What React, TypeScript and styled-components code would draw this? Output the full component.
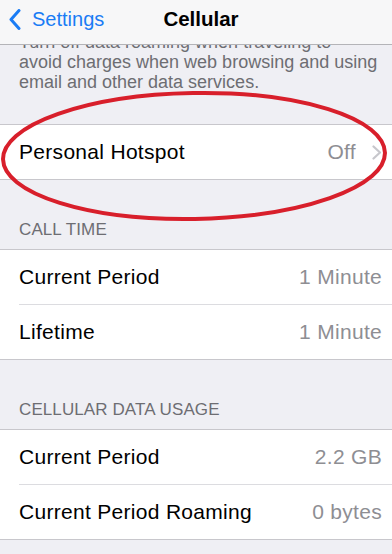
import React from "react";
import styled, { createGlobalStyle } from "styled-components";

const Global = createGlobalStyle`
  html, body { margin: 0; padding: 0; background: #efeff4; }
  body { font-family: "Liberation Sans", Arial, sans-serif; -webkit-font-smoothing: antialiased; }
`;

const Page = styled.div`
  position: relative;
  width: 392px;
  height: 554px;
  overflow: hidden;
  background: #efeff4;
  display: flex;
  flex-direction: column;
`;

const NavBar = styled.div`
  flex: 0 0 auto;
  height: 44px;
  border-bottom: 1px solid #b4b4b8;
  background: #f7f7f8;
  position: relative;
  z-index: 2;
  display: flex;
  align-items: center;
  justify-content: center;
`;

const BackButton = styled.div`
  position: absolute;
  left: 9px;
  top: 0;
  height: 38px;
  display: flex;
  align-items: center;
  gap: 11px;
  color: #1a7cf5;
  font-size: 20px;
`;

const Title = styled.div`
  font-size: 20.5px;
  font-weight: 700;
  color: #000;
  margin-top: -6px;
  margin-left: 10px;
`;

const Content = styled.div`
  flex: 1 1 auto;
  overflow: hidden;
  display: flex;
  flex-direction: column;
`;

const Footer = styled.div`
  margin-top: -13px;
  padding: 0 8px 0 19px;
  font-size: 18px;
  line-height: 20px;
  color: #6d6d72;
  white-space: nowrap;
`;

const FooterLine = styled.div``;

const Group = styled.div<{ $top: number }>`
  margin-top: ${(p) => p.$top}px;
  background: #fff;
  border-top: 1px solid #c8c7cc;
  border-bottom: 1px solid #c8c7cc;
`;

const Header = styled.div`
  padding: 40px 19px 9px;
  font-size: 17px;
  line-height: 20px;
  color: #6d6d72;
  letter-spacing: 0.1px;
`;

const Row = styled.div<{ $sep?: boolean }>`
  height: 54px;
  display: flex;
  align-items: center;
  margin-left: 19px;
  padding-right: 10px;
  border-top: ${(p) => (p.$sep ? "1px solid #dcdce0" : "none")};
  font-size: 21px;
  letter-spacing: 0.3px;
`;

const Label = styled.div`
  flex: 1;
  color: #000;
`;

const Value = styled.div`
  color: #8e8e93;
`;

const Chevron = styled.svg`
  margin-left: 16px;
  flex: 0 0 auto;
`;

const Ellipse = styled.svg`
  position: absolute;
  left: 0;
  top: 88px;
  pointer-events: none;
  z-index: 3;
`;

export default function App() {
  return (
    <>
      <Global />
      <Page>
        <NavBar>
          <BackButton>
            <svg width="12" height="21" viewBox="0 0 12 21">
              <path d="M10 1.5 L2 10.5 L10 19.5" fill="none" stroke="#1a7cf5" strokeWidth="3" strokeLinecap="round" strokeLinejoin="round" />
            </svg>
            <span>Settings</span>
          </BackButton>
          <Title>Cellular</Title>
        </NavBar>
        <Content>
          <Footer>
            <FooterLine>Turn off data roaming when traveling to</FooterLine>
            <FooterLine>avoid charges when web browsing and using</FooterLine>
            <FooterLine>email and other data services.</FooterLine>
          </Footer>
          <Group $top={32}>
            <Row>
              <Label>Personal Hotspot</Label>
              <Value>Off</Value>
              <Chevron width="10" height="15" viewBox="0 0 10 15">
                <path d="M1.5 1.5 L8 7.5 L1.5 13.5" fill="none" stroke="#c7c7cc" strokeWidth="2.2" strokeLinecap="round" strokeLinejoin="round" />
              </Chevron>
            </Row>
          </Group>
          <Header>CALL TIME</Header>
          <Group $top={0}>
            <Row>
              <Label>Current Period</Label>
              <Value>1 Minute</Value>
            </Row>
            <Row $sep>
              <Label>Lifetime</Label>
              <Value>1 Minute</Value>
            </Row>
          </Group>
          <Header>CELLULAR DATA USAGE</Header>
          <Group $top={0}>
            <Row>
              <Label>Current Period</Label>
              <Value>2.2 GB</Value>
            </Row>
            <Row $sep>
              <Label>Current Period Roaming</Label>
              <Value>0 bytes</Value>
            </Row>
          </Group>
        </Content>
        <Ellipse width="392" height="140" viewBox="0 0 392 140">
          <ellipse cx="194" cy="68" rx="191" ry="63" fill="none" stroke="#d81f2b" strokeWidth="4" transform="rotate(-1 194 68)" />
        </Ellipse>
      </Page>
    </>
  );
}
